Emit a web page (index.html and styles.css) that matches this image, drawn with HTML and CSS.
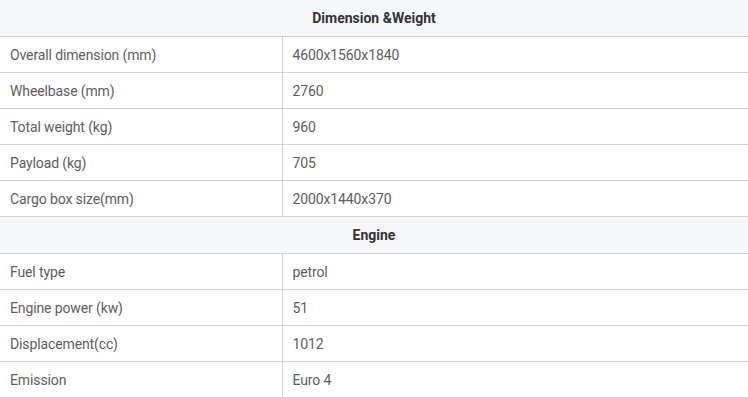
FILE: index.html
```html
<!DOCTYPE html>
<html>
<head>
<meta charset="utf-8">
<link rel="stylesheet" href="styles.css">
</head>
<body>
<table class="spec">
  <colgroup><col class="c1"><col class="c2"></colgroup>
  <tr class="head"><th colspan="2">Dimension &amp;Weight</th></tr>
  <tr><td>Overall dimension (mm)</td><td>4600x1560x1840</td></tr>
  <tr><td>Wheelbase (mm)</td><td>2760</td></tr>
  <tr><td>Total weight (kg)</td><td>960</td></tr>
  <tr><td>Payload (kg)</td><td>705</td></tr>
  <tr><td>Cargo box size(mm)</td><td>2000x1440x370</td></tr>
  <tr class="head"><th colspan="2">Engine</th></tr>
  <tr><td>Fuel type</td><td>petrol</td></tr>
  <tr><td>Engine power (kw)</td><td>51</td></tr>
  <tr><td>Displacement(cc)</td><td>1012</td></tr>
  <tr><td>Emission</td><td>Euro 4</td></tr>
</table>
</body>
</html>
```
FILE: styles.css
```css
html, body { margin: 0; padding: 0; background: #fff; }
.spec {
  width: 748px;
  border-collapse: collapse;
  table-layout: fixed;
  font-family: Roboto, "Liberation Sans", sans-serif;
  font-size: 14px;
  color: #5e5e5e;
}
.c1 { width: 282px; }
.spec th {
  height: 36px;
  padding: 0;
  background: #f6f7f9;
  color: #333;
  font-weight: bold;
  font-size: 14px;
  text-align: center;
  border-bottom: 1px solid #d2d2d2;
}
.spec td {
  height: 35px;
  padding: 0 10px;
  border-bottom: 1px solid #d2d2d2;
  vertical-align: middle;
  letter-spacing: -0.12px;
}
.spec td + td { border-left: 1px solid #d2d2d2; }
```
